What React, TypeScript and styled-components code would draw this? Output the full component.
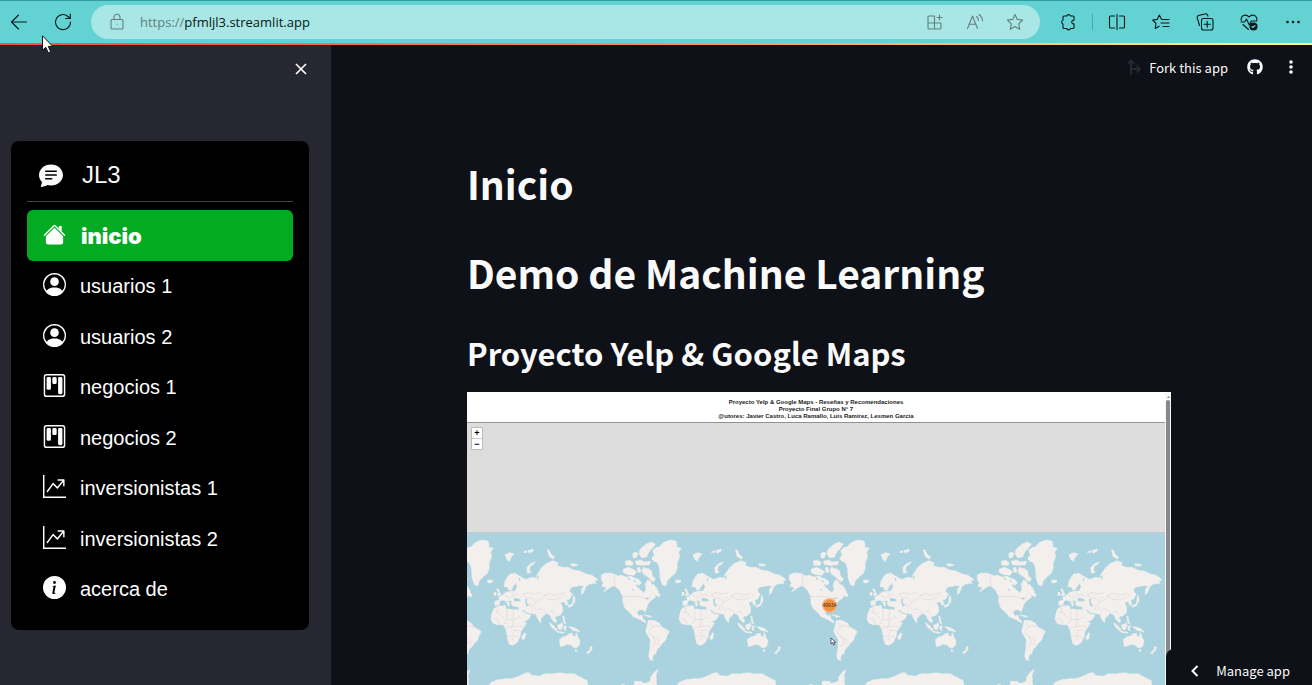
import React from 'react';
import styled, { createGlobalStyle } from 'styled-components';
import {
  BsChatTextFill,
  BsHouseFill,
  BsPersonCircle,
  BsKanban,
  BsGraphUpArrow,
  BsInfoCircleFill,
} from 'react-icons/bs';
import { FaGithub } from 'react-icons/fa';

const appFont = '"Noto Sans CJK JP", "Open Sans", sans-serif';
const menuFont = '"Liberation Sans", Arial, sans-serif';

const GlobalStyle = createGlobalStyle`
  * { box-sizing: border-box; }
  body { margin: 0; background: #0e1117; color: #fafafa; font-family: ${appFont}; }
  button { border: 0; padding: 0; background: none; color: inherit; font: inherit; cursor: pointer; }
  h1, h2, p, ul { margin: 0; padding: 0; }
  svg { display: block; flex: none; }
`;

const Page = styled.div`
  position: relative;
  display: flex;
  flex-direction: column;
  height: 100vh;
  overflow: hidden;
`;

/* Browser bar */
const BrowserBar = styled.header`
  flex: none;
  display: flex;
  align-items: center;
  height: 43px;
  padding: 0 8px;
  border-top: 1px solid #2f9ea0;
  background: #62d2d2;
  color: #08191a;
`;

const NavButtons = styled.div`
  display: flex;
  gap: 22px;
  margin-right: 17px;
`;

const BarButton = styled.button`
  display: grid;
  place-items: center;
  width: 22px;
  height: 22px;
`;

const AddressBar = styled.div`
  flex: 1;
  display: flex;
  align-items: center;
  height: 34px;
  padding: 0 14px 0 17px;
  border-radius: 17px;
  background: #a8e7e5;
  color: #63807f;
`;

const AddressField = styled.label`
  flex: 1;
  display: flex;
  align-items: center;
  height: 24px;
  margin-left: 14px;
  font: 13px "Open Sans", sans-serif;
`;

const Address = styled.input`
  flex: 1;
  min-width: 0;
  height: 24px;
  padding: 0;
  border: 0;
  outline: 0;
  background: none;
  color: #0b1717;
  font: inherit;
`;

const AddressActions = styled.div`
  display: flex;
  gap: 18px;
`;

const Tools = styled.div`
  display: flex;
  align-items: center;
  justify-content: space-between;
  width: 247px;
  margin-left: 17px;
`;

const Divider = styled.span`
  width: 1px;
  height: 16px;
  margin: 0 -9px;
  background: #46a9aa;
`;

const LoadStripe = styled.div`
  flex: none;
  height: 2px;
  background: linear-gradient(90deg, #ff4b4b, #ff8c5c 50%, #fffd80);
`;

/* App */
const AppBody = styled.div`
  flex: 1;
  display: flex;
  min-height: 0;
`;

const Sidebar = styled.aside`
  flex: none;
  width: 331px;
  padding: 13px 22px 0 11px;
  background: #262730;
`;

const CloseRow = styled.div`
  display: flex;
  justify-content: flex-end;
  height: 83px;
`;

const CloseButton = styled.button`
  display: grid;
  place-items: center;
  width: 16px;
  height: 22px;
`;

const MenuCard = styled.nav`
  padding: 16px;
  border-radius: 8px;
  background: #000;
  font-family: ${menuFont};
`;

const MenuTitle = styled.div`
  display: flex;
  align-items: center;
  gap: 19px;
  height: 45px;
  padding: 0 12px 9px;
  border-bottom: 1px solid #444;
  font-size: 24px;
`;

const MenuList = styled.ul`
  display: grid;
  grid-auto-rows: 1fr;
  height: 412px;
  padding-top: 8px;
  list-style: none;
`;

const MenuLink = styled.a<{ $active?: boolean }>`
  display: flex;
  align-items: center;
  gap: ${(p) => (p.$active ? 15 : 14)}px;
  height: 100%;
  padding: 0 16px;
  border-radius: 6px;
  background: ${(p) => (p.$active ? '#02ab21' : 'transparent')};
  color: #fff;
  font-family: ${(p) => (p.$active ? 'Inter, sans-serif' : menuFont)};
  font-size: ${(p) => (p.$active ? 22 : 20)}px;
  font-weight: ${(p) => (p.$active ? 900 : 400)};
  text-decoration: none;
`;

const MenuIcon = styled.span`
  padding-bottom: 2px;
`;

const MenuLabel = styled.span`
  padding-top: 2px;
`;

const Main = styled.main`
  flex: 1;
  display: flex;
  flex-direction: column;
  min-width: 0;
  padding-right: 5px;
`;

const Toolbar = styled.div`
  flex: none;
  display: flex;
  align-items: center;
  justify-content: flex-end;
  height: 44px;
  padding-right: 8px;
  font-size: 13px;
`;

const ForkButton = styled.button`
  display: flex;
  align-items: center;
  gap: 8px;
  margin-right: 19px;
`;

const ToolbarIcon = styled.button`
  display: grid;
  place-items: center;
  width: 16px;
  height: 16px;
  & + & { margin-left: 20px; }
`;

const Content = styled.div`
  flex: 1;
  display: flex;
  flex-direction: column;
  min-height: 0;
  width: 100%;
  max-width: 704px;
  margin: 0 auto;
  padding-top: 62px;
`;

const Title = styled.h1`
  flex: none;
  height: 89px;
  font-size: 39px;
  line-height: 64px;
  font-weight: 700;
  white-space: nowrap;
`;

const Subtitle = styled.h2`
  flex: none;
  height: 63px;
  font-size: 31px;
  line-height: 48px;
  font-weight: 600;
  white-space: nowrap;
`;

const Report = styled.section`
  flex: 1;
  display: flex;
  min-height: 0;
  background: #fff;
`;

const ReportBody = styled.div`
  flex: 1;
  display: flex;
  flex-direction: column;
  min-width: 0;
`;

const ReportHead = styled.div`
  flex: none;
  height: 31px;
  padding-top: 7px;
  border-bottom: 1px solid #929292;
  color: #222;
  font: 700 6px/7px ${menuFont};
  text-align: center;
`;

const MapFrame = styled.div`
  flex: 1;
  display: flex;
  flex-direction: column;
  min-height: 0;
  background: #ddd;
`;

const ZoomControl = styled.div`
  flex: none;
  width: 12px;
  height: 23px;
  margin: 4px 0 82px 4px;
  border: 1px solid #bbb;
  border-radius: 1px;
  background: #fff;
`;

const ZoomButton = styled.button`
  display: block;
  width: 10px;
  height: 10px;
  color: #000;
  font: 700 9px/9px ${menuFont};
  & + & { height: 11px; border-top: 1px solid #ccc; }
`;

const MapArea = styled.div`
  flex: 1;
  min-height: 0;
  overflow: hidden;
  background: #abd3df;
`;

const Scrollbar = styled.div`
  flex: none;
  display: flex;
  flex-direction: column;
  align-items: center;
  width: 6px;
  padding: 4px 1px 0 1px;
  background: #f6f6f6;
`;

const Thumb = styled.div`
  flex: 1;
  width: 4px;
  margin-top: 2px;
  border-radius: 2px 2px 0 0;
  background: #89878b;
`;

const ManageButton = styled.button`
  position: absolute;
  right: 0;
  bottom: 0;
  display: flex;
  align-items: center;
  gap: 16px;
  height: 36px;
  padding: 7px 22px 0 24px;
  border-radius: 8px 0 0 0;
  background: #0e1117;
  font-size: 13px;
  white-space: nowrap;
`;

const Pointer = styled.svg`
  position: absolute;
  left: 42px;
  top: 35px;
`;

const Stroke = ({ size = 18, children }: { size?: number; children: React.ReactNode }) => (
  <svg width={size} height={size} viewBox="0 0 18 18" fill="none" stroke="currentColor" strokeWidth="1.1" strokeLinecap="round" strokeLinejoin="round">
    {children}
  </svg>
);

const menu = [
  { label: 'inicio', Icon: BsHouseFill, active: true },
  { label: 'usuarios 1', Icon: BsPersonCircle },
  { label: 'usuarios 2', Icon: BsPersonCircle },
  { label: 'negocios 1', Icon: BsKanban },
  { label: 'negocios 2', Icon: BsKanban },
  { label: 'inversionistas 1', Icon: BsGraphUpArrow },
  { label: 'inversionistas 2', Icon: BsGraphUpArrow },
  { label: 'acerca de', Icon: BsInfoCircleFill },
];

const land = [
  // Greenland, Iceland
  'M158 62 166 54 178 50 188 40 200 33 214 30 228 34 232 44 228 50 244 55 236 66 239 82 232 96 231 116 226 130 212 142 202 152 197 168 190 166 184 156 180 140 179 118 174 100 160 92 155 84 163 76Z',
  'M226 152 234 149 243 152 239 158 229 159Z',
  // North America
  'M4 136 14 130 30 129 44 133 54 138 66 136 78 142 90 138 104 144 118 150 124 158 116 166 120 180 132 188 138 180 136 164 142 150 152 154 156 166 162 164 172 178 178 194 168 194 164 204 152 212 144 222 139 236 135 247 130 239 114 240 112 250 117 258 127 256 128 266 138 274 136 278 118 268 100 260 88 246 76 236 69 220 68 198 58 180 48 170 38 168 28 174 10 186 20 174 6 168 10 158 4 148Z',
  // Canadian Arctic
  'M140 42 152 36 166 42 156 56 146 66 140 80 126 84 118 74 118 64 124 54Z',
  'M98 72 106 66 114 70 110 82 100 84Z',
  'M76 94 88 90 100 98 96 106 78 106Z',
  'M70 118 84 112 100 118 110 126 102 136 84 134 70 128Z',
  'M106 94 120 90 134 96 152 94 148 104 128 106 110 104Z',
  'M112 114 120 112 122 128 114 126Z',
  'M130 112 144 116 156 124 156 136 166 146 160 156 148 146 140 138 130 132 126 122Z',
  // Caribbean
  'M132 254 144 256 156 261 146 261Z',
  'M168 194 180 192 178 200 170 198Z',
  // South America
  'M144 273 153 270 168 274 178 280 186 292 206 302 206 310 200 318 196 332 186 340 180 350 172 356 168 370 160 374 157 386 159 391 150 390 146 376 150 356 151 328 143 316 137 302 141 290Z',
  // Eurasia
  'M276 170 278 156 286 142 294 132 308 130 322 138 336 146 346 148 356 142 372 144 376 132 390 112 404 100 424 92 438 98 436 108 452 112 468 112 484 120 506 124 522 132 540 136 558 150 548 152 552 160 532 162 520 172 516 186 508 194 508 180 516 166 498 168 478 172 472 182 480 192 474 206 464 210 468 224 461 225 456 214 446 218 452 234 452 244 444 256 428 260 434 272 430 279 420 268 413 254 402 250 388 265 385 278 377 266 372 253 346 248 334 240 322 242 318 230 302 228 297 218 305 215 290 210 292 222 284 214 272 210 264 214 260 226 249 226 249 213 262 211 260 202 272 196 280 188 292 184 308 184 316 170 310 158 304 170 298 180 290 180 286 170Z',
  'M284 218 294 224 290 229 282 216Z',
  // Arabia
  'M318 240 330 243 344 252 357 255 351 266 335 276 328 262Z',
  // Africa
  'M246 236 258 228 280 227 282 236 296 238 318 240 324 256 333 276 343 277 337 290 327 302 325 318 315 338 302 346 291 342 286 322 284 306 278 290 272 284 254 284 244 280 237 268 240 250Z',
  'M338 308 342 312 337 327 331 330 330 320Z',
  // British Isles
  'M254 178 260 176 262 186 268 194 256 197 260 188Z',
  'M246 188 253 187 252 195 246 196Z',
  // Arctic Russia and Svalbard
  'M280 74 292 68 306 72 298 80 292 94 284 88Z',
  'M334 67 344 61 343 68Z', 'M348 62 362 57 364 63 352 70Z',
  'M346 128 344 114 354 102 371 95 366 101 355 109 352 120 358 129Z',
  'M406 60 412 60 416 72 427 80 424 87 412 80Z',
  'M476 103 484 101 498 105 488 109 478 107Z',
  'M540 141 552 143 545 145Z',
  // East Asia
  'M484 196 489 202 488 216 480 228 468 232 467 229 480 222 483 212Z',
  'M453 258 458 262 457 273 463 282 455 278Z',
  'M412 278 422 284 436 300 432 303 420 293Z',
  'M437 286 450 279 453 287 447 299 438 296Z',
  'M434 303 456 307 455 310 436 307Z',
  'M456 289 465 288 460 294 462 302 456 299Z',
  'M471 290 484 292 497 298 504 306 492 303 482 301Z',
  // Oceania
  'M442 329 452 321 462 319 470 312 482 310 482 318 489 321 493 308 498 321 504 334 502 345 494 354 484 352 478 345 466 342 456 347 445 349Z',
  'M489 359 496 360 492 366Z',
  'M537 349 542 353 537 362 529 371 523 369 533 360Z',
  // Antarctica
  'M230 468 236 458 254 450 282 446 300 446 322 438 342 429 352 428 358 436 382 439 398 431 420 432 442 428 466 432 486 431 510 444 526 452 528 468Z',
  'M102 468 103 454 124 454 128 460 140 458 151 454 153 440 160 430 174 418 168 436 170 468Z',
  'M62 468 66 462 76 466Z',
].join('');

const water =
  'M304 206 312 204 324 208 326 214 308 214Z M340 206 346 208 344 216 350 228 344 230 340 218Z M138 202 146 204 144 208 138 206Z M108 162 116 166 120 178 112 172Z M98 150 110 154 104 156Z M84 140 92 148 86 150Z M124 138 134 144 128 150Z M96 176 104 180 98 182Z M322 142 326 150 320 152Z M374 142 380 134 378 150Z';

const borders =
  'M44 134V172 M68 200H124L138 208 152 204 M250 244 266 252 276 266 M258 232 254 250 M284 238V268L276 284 M304 240V268L284 270 M324 260 304 270 300 290 282 294 M300 290 320 288 332 290 M284 318 302 318 306 300 324 302 M300 330 308 318 320 322 M260 284 258 270 242 264 M150 276 158 290 146 306 160 320 168 340 156 350 M158 290 172 286 184 294 M160 320 174 328 176 346 M334 192 350 188 366 192 384 188 M334 194 342 202 360 206 372 216 388 208 396 196 M396 196 412 190 430 196 452 190 462 198 M396 196 408 208 432 210 450 200 M372 216 362 228 374 240 388 236 404 248 M340 220 356 224 360 240 M280 196 292 204 300 198 308 202 M300 188 306 196 318 192 326 200 M412 248 420 240 428 254 M298 176 306 168 312 178';

const WorldMap = () => (
  <svg width="100%" height="153" role="img" aria-label="Mapa del mundo">
    <defs>
      <g id="world">
        <path d={land} fill="#f3efec" stroke="#f3efec" strokeWidth="3" strokeDasharray="4 3 2 4 5 2" />
        <path d={water} fill="#abd3df" />
        <path d={borders} fill="none" stroke="#d6c9d0" strokeWidth="1.6" strokeDasharray="6 2" />
      </g>
    </defs>
    <rect width="100%" height="1" fill="#c3cdd5" />
    <g transform="translate(133 -2) scale(.33333)">
      {[-564, 0, 564, 1128].map((x) => (
        <use key={x} href="#world" x={x} />
      ))}
    </g>
    <circle cx="362.5" cy="73.5" r="7.5" fill="#f2b592" />
    <circle cx="362.5" cy="73.5" r="6" fill="#f1933f" />
    <text x="362.5" y="75" fontSize="5" fontFamily="Liberation Sans, sans-serif" textAnchor="middle" fill="#4a2d12">49934</text>
    <path d="M364 106v6l1.500-1.300 1 2.300 1.200-.5-1-2.200h2z" fill="#fff" stroke="#223" strokeWidth=".7" />
  </svg>
);

export default function App() {
  return (
    <Page>
      <GlobalStyle />
      <BrowserBar>
        <NavButtons>
          <BarButton aria-label="Atrás">
            <Stroke><path d="M16.500 9h-15M8.500 2 1.500 9l7 7" /></Stroke>
          </BarButton>
          <BarButton aria-label="Actualizar">
            <Stroke><path d="M16.500 9A7.500 7.500 0 1 1 14 3.500l2 2M16.300 1v4.500h-4.600" /></Stroke>
          </BarButton>
        </NavButtons>
        <AddressBar>
          <Stroke><path d="M4 6.500h10a1 1 0 0 1 1 1V15a1 1 0 0 1-1 1H4a1 1 0 0 1-1-1V7.500a1 1 0 0 1 1-1zM6 6.500V4.300a3 3 0 0 1 6 0v2.200M9 11v.3" /></Stroke>
          <AddressField>
            https://
            <Address aria-label="Dirección" defaultValue="pfmljl3.streamlit.app" />
          </AddressField>
          <AddressActions>
            <BarButton aria-label="Aplicaciones">
              <Stroke><path d="M8.500 3H3a1 1 0 0 0-1 1v11a1 1 0 0 0 1 1h11a1 1 0 0 0 1-1V10H2M8.500 3v13M13.500 2v5M11 4.500h5" /></Stroke>
            </BarButton>
            <BarButton aria-label="Leer en voz alta">
              <Stroke><path d="M1.500 15.500 6.500 3l5 12.500M3.200 11.300h6.600M10.500 3.500q2 1.500 2 4M13 1.500q3.500 2.300 3.500 6.500" /></Stroke>
            </BarButton>
            <BarButton aria-label="Favorito">
              <Stroke><path d="m9 1.500 2.300 4.900 5.300.7-3.900 3.700 1 5.400L9 13.600l-4.700 2.600 1-5.400L1.400 7.100l5.300-.7z" /></Stroke>
            </BarButton>
          </AddressActions>
        </AddressBar>
        <Tools>
          <BarButton aria-label="Extensiones">
            <Stroke><path d="M5 3h2.700a2 2 0 0 1 3.800 0H14a1 1 0 0 1 1 1v3.200h-.8a1.900 1.900 0 0 0 0 3.700h.8V14.500a1 1 0 0 1-1 1h-2.500a2 2 0 0 1-3.800 0H5a1 1 0 0 1-1-1V11a2 2 0 0 1 0-3.800V4a1 1 0 0 1 1-1z" /></Stroke>
          </BarButton>
          <Divider />
          <BarButton aria-label="Pantalla dividida">
            <Stroke><path d="M6.500 3H2.500a1 1 0 0 0-1 1v10a1 1 0 0 0 1 1h4M11.500 3h4a1 1 0 0 1 1 1v10a1 1 0 0 1-1 1h-4M9 1.500v15" /></Stroke>
          </BarButton>
          <BarButton aria-label="Favoritos">
            <Stroke><path d="M9.500 6.200 7.300 2 5.200 6.400l-4.500.7 3.300 3.400-.8 5 4-2.300M10.500 6.500h6.500M9 10h8M11 13.500h6" /></Stroke>
          </BarButton>
          <BarButton aria-label="Colecciones">
            <Stroke><path d="M7.500 5.500H15a2 2 0 0 1 2 2V15a2 2 0 0 1-2 2H7.500a2 2 0 0 1-2-2V7.500a2 2 0 0 1 2-2zM11.200 8.300v6M8.200 11.300h6M3.500 12.500 1.300 5A2 2 0 0 1 2.600 2.500l6.500-1.600a2 2 0 0 1 2.500 1.300l.3 1" /></Stroke>
          </BarButton>
          <BarButton aria-label="Rendimiento">
            <Stroke><path d="M1.200 7.500C.5 3 5.500 0 9 4c3.500-4 8.500-1 7.800 3.500M1 9h3.500L6.500 6l2.800 6 2-4h5.500M3 11.500l5.500 5" /><circle cx="13.500" cy="13.500" r="3.500" fill="currentColor" /><path d="m12 13.500 1 1 2-2" stroke="#62d2d2" /></Stroke>
          </BarButton>
          <BarButton aria-label="Más">
            <Stroke><g fill="currentColor" stroke="none"><circle cx="3.500" cy="9" r="1.300" /><circle cx="9" cy="9" r="1.300" /><circle cx="14.500" cy="9" r="1.300" /></g></Stroke>
          </BarButton>
        </Tools>
      </BrowserBar>
      <LoadStripe />
      <AppBody>
        <Sidebar>
          <CloseRow>
            <CloseButton aria-label="Cerrar menú">
              <svg width="12" height="12" viewBox="0 0 12 12" stroke="#fafafa" strokeWidth="1.700"><path d="m1 1 10 10M11 1 1 11" /></svg>
            </CloseButton>
          </CloseRow>
          <MenuCard>
            <MenuTitle><BsChatTextFill size={24} />JL3</MenuTitle>
            <MenuList>
              {menu.map(({ label, Icon, active }) => (
                <li key={label}>
                  <MenuLink href="#" $active={active}>
                    <MenuIcon><Icon size={23} /></MenuIcon>
                    <MenuLabel>{label}</MenuLabel>
                  </MenuLink>
                </li>
              ))}
            </MenuList>
          </MenuCard>
        </Sidebar>
        <Main>
          <Toolbar>
            <ForkButton>
              <svg width="14" height="16" viewBox="0 0 14 16" fill="none" stroke="#262730" strokeWidth="2"><path d="M4 16V2M1 4.500 4 1.500l3 3M4 10h8M9.500 6.500 13 10l-3.500 3.500" /></svg>
              Fork this app
            </ForkButton>
            <ToolbarIcon aria-label="GitHub"><FaGithub size={16} /></ToolbarIcon>
            <ToolbarIcon aria-label="Opciones">
              <svg width="4" height="14" viewBox="0 0 4 14" fill="#fafafa"><circle cx="2" cy="2" r="1.800" /><circle cx="2" cy="7" r="1.800" /><circle cx="2" cy="12" r="1.800" /></svg>
            </ToolbarIcon>
          </Toolbar>
          <Content>
            <Title>Inicio</Title>
            <Title>Demo de Machine Learning</Title>
            <Subtitle>Proyecto Yelp &amp; Google Maps</Subtitle>
            <Report>
              <ReportBody>
                <ReportHead>
                  <p>Proyecto Yelp &amp; Google Maps - Reseñas y Recomendaciones</p>
                  <p>Proyecto Final Grupo N° 7</p>
                  <p>@utores: Javier Castro, Luca Ramallo, Luis Ramirez, Lesmen Garcia</p>
                </ReportHead>
                <MapFrame>
                  <ZoomControl>
                    <ZoomButton aria-label="Acercar">+</ZoomButton>
                    <ZoomButton aria-label="Alejar">−</ZoomButton>
                  </ZoomControl>
                  <MapArea><WorldMap /></MapArea>
                </MapFrame>
              </ReportBody>
              <Scrollbar>
                <svg width="3" height="2" viewBox="0 0 3 2" fill="#89878b"><path d="M0 2 1.500 0 3 2z" /></svg>
                <Thumb />
              </Scrollbar>
            </Report>
          </Content>
        </Main>
      </AppBody>
      <ManageButton>
        <svg width="10" height="12" viewBox="0 0 10 12" fill="none" stroke="#fafafa" strokeWidth="2"><path d="M7.500 1 2.500 6l5 5" /></svg>
        Manage app
      </ManageButton>
      <Pointer width="12" height="20" viewBox="0 0 12 20" fill="#fff" stroke="#111" strokeWidth="1">
        <path d="M.5.800v14.500l3.300-3 2.400 5.500 2.500-1.100-2.400-5.300h4.500z" />
      </Pointer>
    </Page>
  );
}
